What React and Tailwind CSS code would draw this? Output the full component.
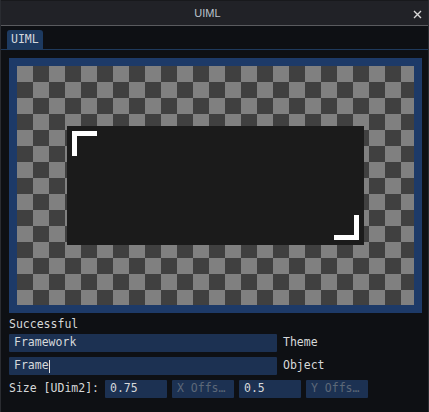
import React from "react";

const mono = { fontFamily: '"DejaVu Sans Mono", "Liberation Mono", monospace' };

function Input({ value, placeholder, width, cursor }) {
  return (
    <div className={`${width} h-[18px] bg-[#1c3152] rounded-[1px] flex items-center pl-[5px] overflow-hidden`}>
      {value ? (
        <span className="text-[#d6d8da] whitespace-pre">{value}</span>
      ) : (
        <span className="text-[#5c6878] whitespace-pre">{placeholder}</span>
      )}
      {cursor && <span className="w-px h-[13px] bg-[#e0e0e0]" />}
    </div>
  );
}

export default function App() {
  return (
    <div
      className="w-[429px] h-[412px] bg-[#0e1014] border-x border-[#2a2c31] flex flex-col text-[11.5px] leading-none"
      style={mono}
    >
      {/* title bar */}
      <div className="h-[26px] shrink-0 bg-[#212227] border-t border-[#18191c] border-b border-b-[#5a5b5f] flex items-center relative">
        <div
          className="flex-1 text-center pr-[14px] text-[11px] text-[#bcc3cc]"
          style={{ fontFamily: '"Liberation Sans", Arial, sans-serif' }}
        >
          UIML
        </div>
        <svg className="absolute left-[412px] top-[9px]" width="9" height="9" viewBox="0 0 9 9">
          <path d="M1 1 L8 8 M8 1 L1 8" stroke="#d8d8d8" strokeWidth="1.4" />
        </svg>
      </div>

      {/* tab bar */}
      <div className="shrink-0 pt-[4px] px-[6px] border-b border-[#1f3a5c] flex">
        <div className="h-[19px] px-[4px] bg-[#1d3a60] rounded-t-[3px] flex items-center text-[#d4d8dc]">
          UIML
        </div>
      </div>

      {/* content */}
      <div className="flex flex-col pl-[8px] pt-[8px]">
        <div className="w-[413px] h-[255px] border-[8px] border-[#1d3a68]">
          <div className="w-full h-full bg-[conic-gradient(#404040_25%,#808080_0_50%,#404040_0_75%,#808080_0)] bg-[length:32px_32px] flex items-center justify-center">
            <div className="w-[297px] h-[119px] bg-[#1b1b1b] relative">
              <div className="absolute left-[5px] top-[5px] w-[25px] h-[5px] bg-white" />
              <div className="absolute left-[5px] top-[5px] w-[5px] h-[25px] bg-white" />
              <div className="absolute right-[5px] bottom-[5px] w-[25px] h-[5px] bg-white" />
              <div className="absolute right-[5px] bottom-[5px] w-[5px] h-[25px] bg-white" />
            </div>
          </div>
        </div>

        <div className="mt-[3px] h-[17px] flex items-center text-[#d6d8da]">Successful</div>

        <div className="mt-[1px] flex items-center gap-[6px]">
          <Input value="Framework" width="w-[268px]" />
          <span className="text-[#d6d8da]">Theme</span>
        </div>

        <div className="mt-[5px] flex items-center gap-[6px]">
          <Input value="Frame" width="w-[268px]" cursor />
          <span className="text-[#d6d8da]">Object</span>
        </div>

        <div className="mt-[5px] flex items-center">
          <span className="w-[96px] text-[#d6d8da] whitespace-pre">Size [UDim2]:</span>
          <div className="flex gap-[5px]">
            <Input value="0.75" width="w-[62px]" />
            <Input placeholder="X Offs…" width="w-[62px]" />
            <Input value="0.5" width="w-[62px]" />
            <Input placeholder="Y Offs…" width="w-[62px]" />
          </div>
        </div>
      </div>
    </div>
  );
}
